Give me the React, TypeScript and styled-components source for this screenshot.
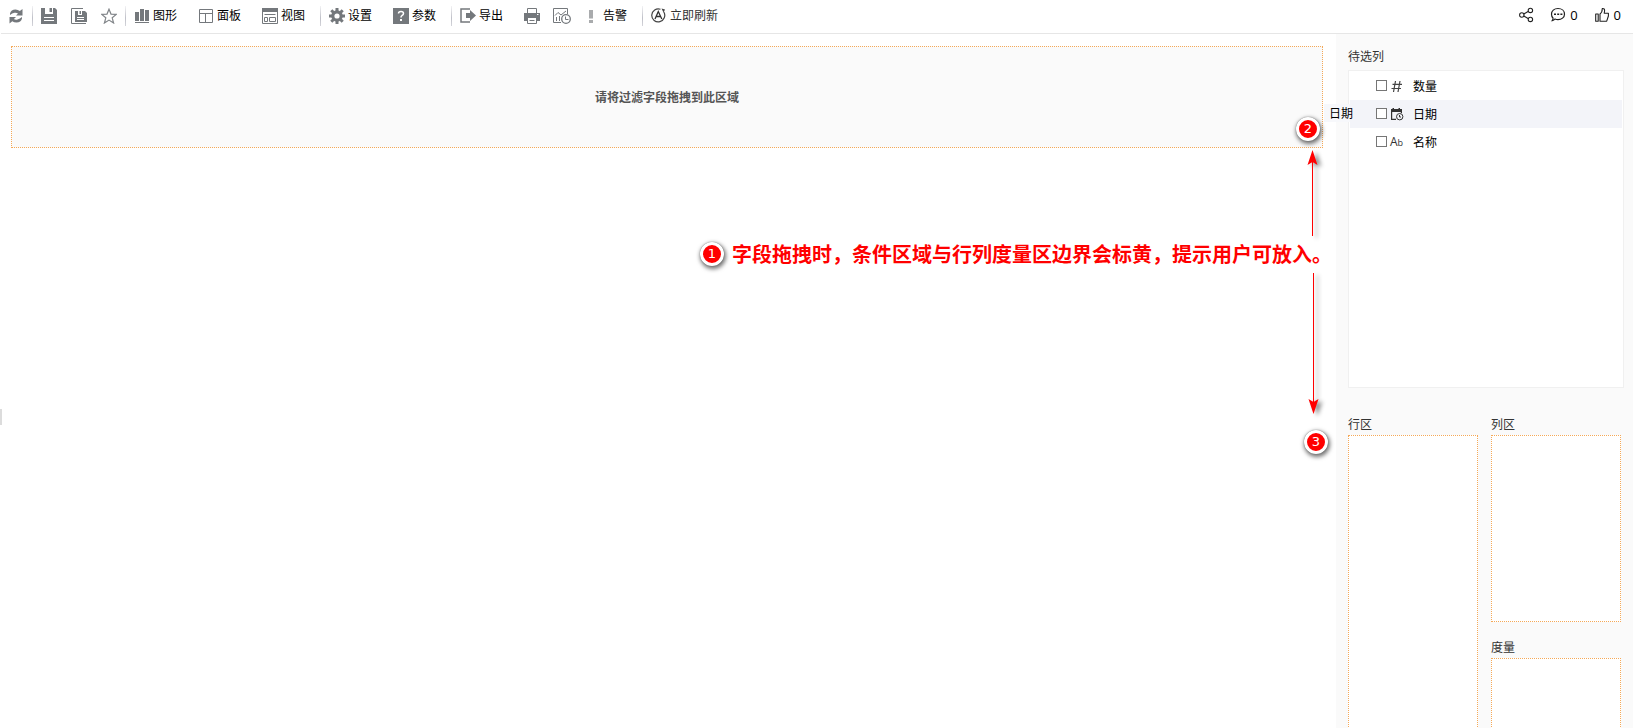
import React from 'react';
import styled, { createGlobalStyle } from 'styled-components';

const GlobalStyle = createGlobalStyle`
  *, *::before, *::after { box-sizing: border-box; }
  body {
    margin: 0;
    background: #fff;
    color: #000;
    font: 12px/18px "Open Sans", "Noto Sans CJK SC", sans-serif;
  }
  h2, p { margin: 0; font: inherit; }
  button { font: inherit; color: inherit; background: none; border: 0; padding: 0; cursor: pointer; }
`;

const ORANGE = '#f5a958';

const Page = styled.div`
  position: relative;
  display: flex;
  flex-direction: column;
  height: 100vh;
  overflow: hidden;
`;

const Toolbar = styled.header`
  display: flex;
  align-items: center;
  justify-content: space-between;
  flex: none;
  height: 34px;
  margin-left: 1px;
  padding: 0 12px 2px 7px;
  border-bottom: 1px solid #e6e6e6;
`;

const Group = styled.div<{ $gap: number }>`
  display: flex;
  align-items: center;
  gap: ${p => p.$gap}px;
`;

const Divider = styled.span<{ $wide?: boolean }>`
  width: 1px;
  height: 20px;
  margin: 0 8px 0 ${p => (p.$wide ? 15 : 8)}px;
  background: linear-gradient(#f2f2f4, #bfc0c8 60%, #d4d4da);
`;

const ToolButton = styled.button<{ $color?: string }>`
  display: flex;
  align-items: center;
  gap: 3px;
  height: 24px;
  color: ${p => p.$color || '#000'};
  white-space: nowrap;

  svg { display: block; flex: none; }
`;

const SocialButton = styled(ToolButton)`
  gap: 4px;
  padding-bottom: 2px;
  font-size: 13px;
`;

const Body = styled.div`
  display: flex;
  flex: 1;
  min-height: 0;
`;

const Main = styled.main`
  flex: 1;
  padding: 12px 13px 0 11px;
`;

const FilterZone = styled.section`
  display: flex;
  align-items: center;
  justify-content: center;
  height: 102px;
  padding-top: 2px;
  border: 1px dotted ${ORANGE};
  background: #fafafa;
  color: #555;
  font-weight: 700;
`;

const Side = styled.aside`
  flex: none;
  width: 297px;
  padding: 13px 9px 0 12px;
  background: #fafafa;
  color: #333;
  overflow: hidden;
`;

const Heading = styled.h2`
  height: 20px;
  line-height: 19px;
`;

const FieldList = styled.ul`
  list-style: none;
  height: 318px;
  margin: 3px 0 27px;
  padding: 1px;
  border: 1px solid #f0f0f0;
  background: #fff;
  color: #000;
`;

const FieldRow = styled.li<{ $active?: boolean }>`
  height: 28px;
  padding-left: 26px;
  background: ${p => (p.$active ? '#f3f4f9' : 'transparent')};
`;

const FieldLabel = styled.label`
  display: flex;
  align-items: center;
  height: 28px;

  svg { margin: 0 9px 0 3px; }
`;

const FieldName = styled.span`
  padding-top: 2px;
`;

const Check = styled.input`
  appearance: none;
  width: 11px;
  height: 11px;
  margin: 0 0 2px;
  border: 1px solid #767676;
  background: #fff;
`;

const Zones = styled.div`
  display: grid;
  grid-template-columns: 1fr 1fr;
  column-gap: 13px;
  padding-right: 3px;
`;

const ZoneColumn = styled.div`
  display: flex;
  flex-direction: column;
  gap: 16px;
`;

const Zone = styled.section<{ $fill?: boolean }>`
  display: flex;
  flex-direction: column;
  flex: ${p => (p.$fill ? 1 : 'none')};
`;

const DropBox = styled.div`
  flex: 1;
  min-height: 187px;
  border: 1px dotted ${ORANGE};
  background: #fff;
`;

/* Collapsed left-panel handle, laid over the edge of the canvas */
const Handle = styled.button`
  && {
    position: absolute;
    left: 0;
    top: 409px;
    width: 2px;
    height: 16px;
    background: #dcdcdc;
  }
`;

/* Label that follows the pointer while a field is dragged */
const DragGhost = styled.div`
  position: absolute;
  top: 104px;
  right: 280px;
  width: 29px;
  height: 18px;
  padding-left: 5px;
  line-height: 20px;
  white-space: nowrap;
  background: linear-gradient(90deg, #f7f8fb 26px, transparent 26px);
`;

const Note = styled.div`
  position: absolute;
  top: 239px;
  right: 301px;
  display: flex;
  align-items: center;
  gap: 8px;
  color: #f00;
  font: bold 20px/30px "Noto Sans CJK SC", sans-serif;
  white-space: nowrap;
`;

const Badge = styled.span`
  display: flex;
  align-items: center;
  justify-content: center;
  width: 24px;
  height: 24px;
  border: 3px solid #fff;
  border-radius: 50%;
  background: #f00;
  box-shadow: 1px 2px 4px 1px rgba(0, 0, 0, 0.55), 0 0 1px rgba(0, 0, 0, 0.5);
  color: #fff;
  font: 13px/18px "DejaVu Sans", sans-serif;
`;

const PinnedBadge = styled(Badge)<{ $top: number; $right: number }>`
  position: absolute;
  top: ${p => p.$top}px;
  right: ${p => p.$right}px;
`;

const ArrowSvg = styled.svg<{ $top: number; $right: number }>`
  position: absolute;
  top: ${p => p.$top}px;
  right: ${p => p.$right}px;
  filter: drop-shadow(4px 2px 2px rgba(0, 0, 0, 0.45));
  overflow: visible;
  pointer-events: none;
`;

const Svg = ({ children, w = 16 }: { children: React.ReactNode; w?: number }) => (
  <svg width={w} height="16" viewBox={`0 0 ${w} 16`} fill="none" aria-hidden="true">
    {children}
  </svg>
);

const G = '#74787c';

const RefreshIcon = () => (
  <Svg>
    <path d="M2 7V5.500Q3 1.500 7.500 1.500Q10 1.500 11.800 3L14.500 1V7.500H8L10 5.500Q8.500 4.500 6.500 4.800Q4 5.200 2 7Z" fill={G} />
    <path d="M14 9V10.500Q13 14.500 8.500 14.500Q6 14.500 4.300 13.200L1.500 15.500V9H8L5.900 11Q7.500 12 9.500 11.400Q12 10.800 14 9Z" fill={G} />
  </Svg>
);
const SaveIcon = () => (
  <Svg>
    <path d="M0 0H4V6H12V0H14L16 2V16H0Z" fill={G} />
    <path d="M8.500 0H11V4H8.500Z" fill={G} />
    <path d="M3 9.500H13M3 12.500H13" stroke="#fff" />
  </Svg>
);
const SaveAsIcon = () => (
  <Svg>
    <path d="M12 .5H.5V15.500H15" stroke={G} />
    <path d="M4 3H7V7H11V3H14L16 5V14H4Z" fill={G} />
    <path d="M8.500 3H10V6H8.500Z" fill={G} />
    <path d="M6 9.500H13M6 11.500H13" stroke="#fff" />
  </Svg>
);
const StarIcon = () => (
  <Svg>
    <path d="M8 1.200L10 6.100L15.300 6.400L11.200 9.800L12.600 15L8 12.100L3.400 15L4.800 9.800L.7 6.400L6 6.100Z" stroke="#808488" strokeWidth="1.200" />
  </Svg>
);
const BarsIcon = () => (
  <Svg>
    <path d="M1 4H5V13H1ZM6 1H10V13H6ZM11 2H15V13H11ZM1 14H15V15H1Z" fill={G} />
  </Svg>
);
const PanelIcon = () => (
  <Svg>
    <path d="M1.500 1.500H14.500V14.500H1.500ZM1.500 5.500H14.500M7.500 5.500V14.500" stroke={G} />
  </Svg>
);
const ViewIcon = () => (
  <Svg>
    <path d="M0 0H16V4H0Z" fill={G} />
    <path d="M.5 3.500H15.500V15.500H.5ZM2.500 6.500H13.500M2.500 9.500H5.500V13.500H2.500ZM7.500 9.500H13.500V13.500H7.500Z" stroke={G} />
  </Svg>
);
const GearIcon = () => (
  <Svg>
    <circle cx="8" cy="8" r="4.200" stroke={G} strokeWidth="3.200" />
    <path d="M8 0V3M8 13V16M0 8H3M13 8H16M2.300 2.300L4.500 4.500M11.500 11.500L13.700 13.700M13.700 2.300L11.500 4.500M4.500 11.500L2.300 13.700" stroke={G} strokeWidth="3" />
  </Svg>
);
const HelpIcon = () => (
  <Svg>
    <path d="M0 0H16V16H0Z" fill={G} />
    <path d="M5.500 5.500Q5.500 3.500 8 3.500Q10.500 3.500 10.500 5.500Q10.500 6.800 9 7.500Q8 8.200 8 9.500" stroke="#fff" strokeWidth="1.500" />
    <path d="M7 11H9V13H7Z" fill="#fff" />
  </Svg>
);
const ExportIcon = () => (
  <Svg>
    <path d="M10 1H1V14H10" stroke={G} strokeWidth="1.500" />
    <path d="M6 5H10V2L16 7.500L10 13V10H6Z" fill={G} />
  </Svg>
);
const PrintIcon = () => (
  <Svg>
    <path d="M3.500 5V.5H12.500V5" stroke={G} />
    <path d="M0 5H16V13H13V10H3V13H0Z" fill={G} />
    <path d="M3.500 10V15.500H12.500V10M5.500 12.500H10.500" stroke={G} />
    <path d="M13 6.500H14.500" stroke="#fff" />
  </Svg>
);
const ChartClockIcon = () => (
  <Svg w={18}>
    <path d="M8 14.500H.5V.5H14.500V6" stroke={G} />
    <path d="M2 7.500L5 4.500L8 7L13 3M3.500 9V13M6.500 8V13M9.500 8.500V9" stroke={G} />
    <circle cx="13" cy="11" r="4.300" stroke={G} strokeWidth="1.300" fill="#fff" />
    <path d="M12.500 8.500V11.500H15.500" stroke={G} />
  </Svg>
);
const AlertIcon = () => (
  <Svg>
    <path d="M5 2H9V10.500H5ZM5 12H9V15H5Z" fill="#a9abad" />
  </Svg>
);
const AutoIcon = () => (
  <Svg>
    <path d="M9.500 1.300A6.500 6.500 0 1 0 12.800 4" stroke="#444" strokeWidth="1.200" />
    <path d="M10.500 .6L14 1.600L12.500 4.600Z" fill="#444" />
    <path d="M4 11L7.300 3.500L10.800 11M5.200 8.500H9.500" stroke="#333" strokeWidth="1.300" />
  </Svg>
);
const ShareIcon = () => (
  <Svg>
    <path d="M5.800 7L10.500 4.200M5.800 9L10.500 11.800" stroke="#222" strokeWidth="1.100" />
    <circle cx="3.800" cy="8" r="2.200" stroke="#222" strokeWidth="1.100" />
    <circle cx="12.400" cy="3.400" r="2.200" stroke="#222" strokeWidth="1.100" />
    <circle cx="12.400" cy="12.400" r="2.200" stroke="#222" strokeWidth="1.100" />
  </Svg>
);
const CommentIcon = () => (
  <Svg>
    <path d="M8 1.500C12 1.500 14.500 4 14.500 7.200C14.500 10.500 11.500 12.600 8 12.600C6.800 12.600 6 12.400 5 12C4.300 12.900 3.300 13.500 2.300 13.600C3 12.800 3.200 12 3 11C2 10 1.500 8.700 1.500 7.200C1.500 4 4 1.500 8 1.500Z" stroke="#222" strokeWidth="1.200" />
    <path d="M4 6.500H6V8H4ZM7.200 6.500H9.200V8H7.200ZM10.400 6.500H12.400V8H10.400Z" fill="#222" />
  </Svg>
);
const ThumbIcon = () => (
  <Svg>
    <path d="M1.700 7H4.200V14.200H1.700ZM6 7Q8.300 5.500 8.300 1.600Q10.800 1.200 10.600 4L10.200 6.200H14.400V9L12.700 14.200H6Z" stroke="#222" strokeWidth="1.100" strokeLinejoin="round" />
  </Svg>
);

const HashIcon = () => (
  <svg width="14" height="14" viewBox="0 0 14 14" fill="none" aria-hidden="true">
    <path d="M5.500 2L3.500 13M10 2L8 13M2.500 5.300H12M1.500 9.500H11" stroke="#444" strokeWidth="1.200" />
  </svg>
);
const DateIcon = () => (
  <svg width="14" height="14" viewBox="0 0 14 14" fill="none" aria-hidden="true">
    <path d="M1 2H2.500V1H4V2H8.500V1H10V2H12V5H1Z" fill="#333" />
    <path d="M6 12.400H1.600V4M11.400 4V6" stroke="#333" strokeWidth="1.200" />
    <circle cx="9.700" cy="9.700" r="3.200" stroke="#333" fill="#f3f4f9" />
    <path d="M9.500 8V10H11" stroke="#333" />
  </svg>
);
const TypeText = styled.span`
  width: 14px;
  margin: 0 9px 0 3px;
  color: #333;
  font: 12px/14px "Open Sans", sans-serif;

  small { font-size: 9px; }
`;

const groups = [
  {
    gap: 21,
    items: [
      { icon: <BarsIcon />, label: '图形' },
      { icon: <PanelIcon />, label: '面板' },
      { icon: <ViewIcon />, label: '视图' },
    ],
  },
  {
    gap: 21,
    items: [
      { icon: <GearIcon />, label: '设置' },
      { icon: <HelpIcon />, label: '参数' },
    ],
  },
];

const fields = [
  { id: 'qty', label: '数量', icon: <HashIcon /> },
  { id: 'date', label: '日期', icon: <DateIcon />, active: true },
  { id: 'name', label: '名称', icon: <TypeText aria-hidden="true">A<small>b</small></TypeText> },
];

export default function App() {
  return (
    <Page>
      <GlobalStyle />
      <Toolbar>
        <Group $gap={0}>
          <ToolButton aria-label="刷新"><RefreshIcon /></ToolButton>
          <Divider />
          <Group $gap={14}>
            <ToolButton aria-label="保存"><SaveIcon /></ToolButton>
            <ToolButton aria-label="另存为"><SaveAsIcon /></ToolButton>
            <ToolButton aria-label="收藏"><StarIcon /></ToolButton>
          </Group>
          <Divider />
          {groups.map((g, i) => (
            <React.Fragment key={i}>
              <Group $gap={g.gap}>
                {g.items.map(it => (
                  <ToolButton key={it.label}>{it.icon}{it.label}</ToolButton>
                ))}
              </Group>
              <Divider $wide />
            </React.Fragment>
          ))}
          <Group $gap={21}>
            <ToolButton><ExportIcon />导出</ToolButton>
            <Group $gap={13}>
              <ToolButton aria-label="打印"><PrintIcon /></ToolButton>
              <ToolButton aria-label="定时"><ChartClockIcon /></ToolButton>
              <ToolButton><AlertIcon />告警</ToolButton>
            </Group>
          </Group>
          <Divider $wide />
          <ToolButton $color="#333"><AutoIcon />立即刷新</ToolButton>
        </Group>
        <Group $gap={16}>
          <SocialButton aria-label="分享"><ShareIcon /></SocialButton>
          <SocialButton aria-label="评论"><CommentIcon />0</SocialButton>
          <SocialButton aria-label="点赞"><ThumbIcon />0</SocialButton>
        </Group>
      </Toolbar>

      <Body>
        <Main>
          <FilterZone><p>请将过滤字段拖拽到此区域</p></FilterZone>
        </Main>
        <Side>
          <Heading>待选列</Heading>
          <FieldList>
            {fields.map(f => (
              <FieldRow key={f.id} $active={f.active}>
                <FieldLabel htmlFor={f.id}>
                  <Check type="checkbox" id={f.id} />
                  {f.icon}
                  <FieldName>{f.label}</FieldName>
                </FieldLabel>
              </FieldRow>
            ))}
          </FieldList>
          <Zones>
            <ZoneColumn>
              <Zone $fill><Heading>行区</Heading><DropBox /></Zone>
            </ZoneColumn>
            <ZoneColumn>
              <Zone><Heading>列区</Heading><DropBox /></Zone>
              <Zone><Heading>度量</Heading><DropBox /></Zone>
            </ZoneColumn>
          </Zones>
        </Side>
      </Body>

      <Handle aria-label="展开面板" />
      <DragGhost>日期</DragGhost>
      <Note><Badge>1</Badge>字段拖拽时，条件区域与行列度量区边界会标黄，提示用户可放入。</Note>
      <PinnedBadge $top={117} $right={313}>2</PinnedBadge>
      <PinnedBadge $top={430} $right={305}>3</PinnedBadge>
      <ArrowSvg $top={150} $right={315} width="11" height="86" viewBox="0 0 11 86" aria-hidden="true">
        <path d="M5.500 0L10.500 15L5.500 12L.5 15Z" fill="#f00" />
        <path d="M5.500 10V86" stroke="#f00" />
      </ArrowSvg>
      <ArrowSvg $top={273} $right={314} width="11" height="141" viewBox="0 0 11 141" aria-hidden="true">
        <path d="M5.500 141L10.500 126L5.500 129L.5 126Z" fill="#f00" />
        <path d="M5.500 0V130" stroke="#f00" />
      </ArrowSvg>
    </Page>
  );
}
